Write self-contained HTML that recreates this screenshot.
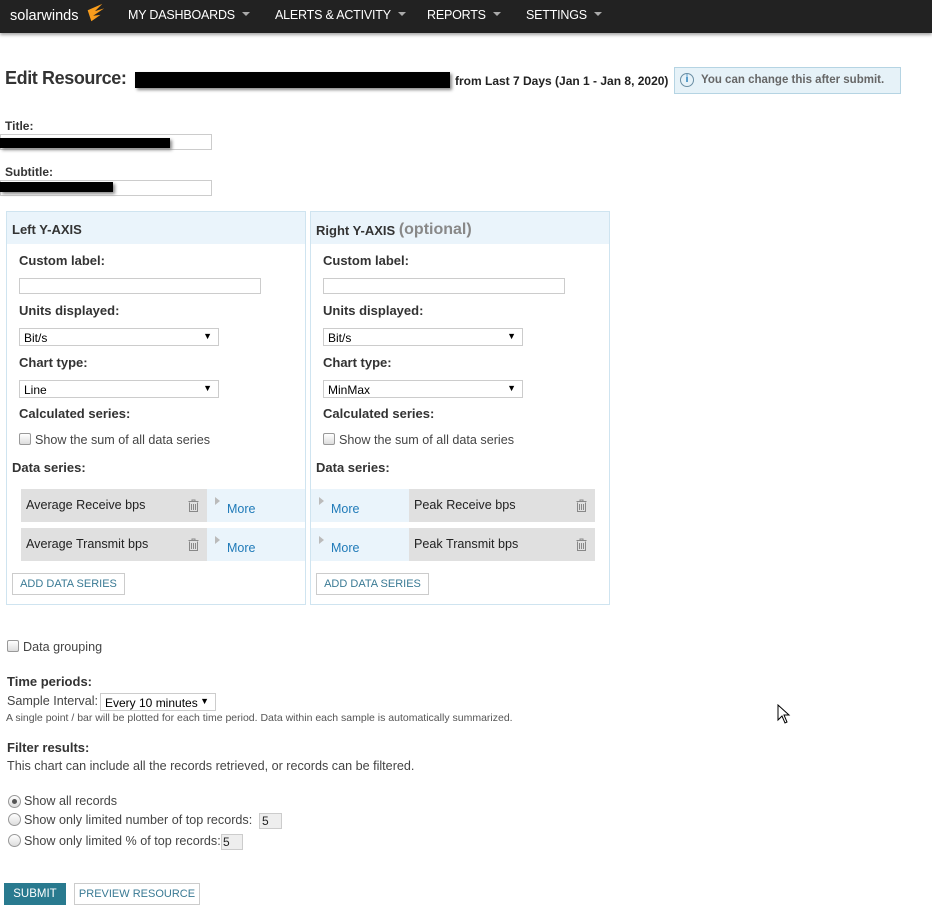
<!DOCTYPE html>
<html><head><meta charset="utf-8">
<style>
*{box-sizing:border-box;margin:0;padding:0}
body{width:932px;height:912px;background:#fff;position:relative;overflow:hidden;font-family:"Liberation Sans",sans-serif;color:#333;font-size:12px}
.a{position:absolute;white-space:nowrap}
.nav{position:absolute;left:0;top:0;width:932px;height:33px;background:#222;box-shadow:0 2px 3px rgba(0,0,0,.35)}
.nav .m{position:absolute;top:8px;color:#fff;font-size:12.5px;letter-spacing:-0.2px}
.nav .m::after{content:"";display:inline-block;margin-left:7px;border-left:4px solid transparent;border-right:4px solid transparent;border-top:4px solid #aaa;vertical-align:3px}
.b{font-weight:bold}
.lbl{font-weight:bold;font-size:13px;color:#333}
.inp{position:absolute;border:1px solid #ccc;background:#fff}
.sel{position:absolute;border:1px solid #ccc;background:#fff;font-size:12px;color:#000;padding:2px 0 0 4px}
.sel::after{content:"▼";position:absolute;right:6px;top:2px;font-size:9px}
.cb{position:absolute;width:12px;height:12px;border:1px solid #999;border-radius:2px;background:linear-gradient(#fff,#ddd)}
.rb{position:absolute;width:13px;height:13px;border:1px solid #999;border-radius:50%;background:linear-gradient(#fff,#ddd)}
.panel{position:absolute;border:1px solid #cfe4f0;width:300px;height:394px;top:211px}
.ph{position:absolute;left:0;top:0;right:0;height:32px;background:#eaf4fb}
.gray{position:absolute;background:#e0e0e0;height:33px}
.blue{position:absolute;background:#eaf4fb;height:33px}
.more{color:#1f7ab8;font-size:12.5px}
.tri{position:absolute;border-top:4px solid transparent;border-bottom:4px solid transparent;border-left:5px solid #bbb}
.t{font-size:12.6px;color:#444}
.btn{position:absolute;border:1px solid #ccc;background:#fff;color:#3a7a94;font-size:11px;text-align:center;line-height:20px}
.blk{position:absolute;background:#000}
</style></head><body>
<div class="nav">
 <div class="a" style="left:10px;top:8px;color:#fff;font-size:14.5px">solarwinds</div>
 <svg class="a" style="left:84px;top:2px" width="22" height="22" viewBox="0 0 24 22"><path d="M4 8 L20 1 L12 9 L22 6 L10 14 L18 13 L8 20 Z" fill="#f99d1c"/></svg>
 <div class="m" style="left:128px">MY DASHBOARDS</div>
 <div class="m" style="left:275px">ALERTS &amp; ACTIVITY</div>
 <div class="m" style="left:427px">REPORTS</div>
 <div class="m" style="left:526px">SETTINGS</div>
</div>

<div class="a b" style="left:5px;top:68px;font-size:18px;letter-spacing:-0.4px;color:#333">Edit Resource:</div>
<div class="blk" style="left:135px;top:72px;width:315px;height:16px;box-shadow:2px 2px 3px #888"></div>
<div class="a b" style="left:455px;top:74px;font-size:12px;color:#222">from Last 7 Days (Jan 1 - Jan 8, 2020)</div>
<div class="a" style="left:674px;top:67px;width:227px;height:27px;background:#e6f2f8;border:1px solid #b5d4e3"></div>
<div class="a" style="left:680px;top:73px;width:14px;height:14px;border:1px solid #6a8ea3;border-radius:50%;color:#1f7ab8;font-size:10px;font-weight:bold;text-align:center;line-height:12px">i</div>
<div class="a b" style="left:701px;top:74px;font-size:11.5px;color:#666">You can change this after submit.</div>

<div class="a b" style="left:5px;top:119px;font-size:12px">Title:</div>
<div class="inp" style="left:0;top:134px;width:212px;height:16px"></div>
<div class="blk" style="left:0;top:138px;width:170px;height:10px;box-shadow:2px 2px 3px #888"></div>
<div class="a b" style="left:5px;top:165px;font-size:12px">Subtitle:</div>
<div class="inp" style="left:0;top:180px;width:212px;height:16px"></div>
<div class="blk" style="left:0;top:182px;width:113px;height:10px;box-shadow:2px 2px 3px #888"></div>

<div class="panel" style="left:6px">
 <div class="ph"></div>
 <div class="a b" style="left:5px;top:10px;font-size:13px">Left Y-AXIS</div>
</div>
<div class="a lbl" style="left:19px;top:253px">Custom label:</div>
<div class="inp" style="left:19px;top:278px;width:242px;height:16px"></div>
<div class="a lbl" style="left:19px;top:303px">Units displayed:</div>
<div class="sel" style="left:19px;top:328px;width:200px;height:18px">Bit/s</div>
<div class="a lbl" style="left:19px;top:355px">Chart type:</div>
<div class="sel" style="left:19px;top:380px;width:200px;height:18px">Line</div>
<div class="a lbl" style="left:19px;top:406px">Calculated series:</div>
<div class="cb" style="left:19px;top:433px"></div>
<div class="a t" style="left:35px;top:433px">Show the sum of all data series</div>
<div class="a lbl" style="left:12px;top:460px">Data series:</div>
<div class="gray" style="left:21px;top:489px;width:186px"></div>
<div class="blue" style="left:207px;top:489px;width:98px"></div>
<div class="a t" style="left:26px;top:498px;color:#222">Average Receive bps</div>
<svg class="a" style="left:188px;top:499px" width="11" height="13" viewBox="0 0 11 13"><path d="M0.5 2.5h10M4 2.5V1h3v1.5M1.5 3.5v9h8v-9M3.5 5v6M5.5 5v6M7.5 5v6" fill="none" stroke="#888"/></svg>
<div class="tri" style="left:215px;top:497px"></div>
<div class="a more" style="left:227px;top:502px">More</div>
<div class="gray" style="left:21px;top:528px;width:186px"></div>
<div class="blue" style="left:207px;top:528px;width:98px"></div>
<div class="a t" style="left:26px;top:537px;color:#222">Average Transmit bps</div>
<svg class="a" style="left:188px;top:538px" width="11" height="13" viewBox="0 0 11 13"><path d="M0.5 2.5h10M4 2.5V1h3v1.5M1.5 3.5v9h8v-9M3.5 5v6M5.5 5v6M7.5 5v6" fill="none" stroke="#888"/></svg>
<div class="tri" style="left:215px;top:536px"></div>
<div class="a more" style="left:227px;top:541px">More</div>
<div class="btn" style="left:12px;top:573px;width:113px;height:22px">ADD DATA SERIES</div>

<div class="panel" style="left:310px">
 <div class="ph"></div>
 <div class="a b" style="left:5px;top:10px;font-size:13px">Right Y-AXIS <span style="color:#888;font-size:16px;position:relative;top:-1px">(optional)</span></div>
</div>
<div class="a lbl" style="left:323px;top:253px">Custom label:</div>
<div class="inp" style="left:323px;top:278px;width:242px;height:16px"></div>
<div class="a lbl" style="left:323px;top:303px">Units displayed:</div>
<div class="sel" style="left:323px;top:328px;width:200px;height:18px">Bit/s</div>
<div class="a lbl" style="left:323px;top:355px">Chart type:</div>
<div class="sel" style="left:323px;top:380px;width:200px;height:18px">MinMax</div>
<div class="a lbl" style="left:323px;top:406px">Calculated series:</div>
<div class="cb" style="left:323px;top:433px"></div>
<div class="a t" style="left:339px;top:433px">Show the sum of all data series</div>
<div class="a lbl" style="left:316px;top:460px">Data series:</div>
<div class="blue" style="left:311px;top:489px;width:98px"></div>
<div class="gray" style="left:409px;top:489px;width:186px"></div>
<div class="tri" style="left:319px;top:497px"></div>
<div class="a more" style="left:331px;top:502px">More</div>
<div class="a t" style="left:414px;top:498px;color:#222">Peak Receive bps</div>
<svg class="a" style="left:576px;top:499px" width="11" height="13" viewBox="0 0 11 13"><path d="M0.5 2.5h10M4 2.5V1h3v1.5M1.5 3.5v9h8v-9M3.5 5v6M5.5 5v6M7.5 5v6" fill="none" stroke="#888"/></svg>
<div class="blue" style="left:311px;top:528px;width:98px"></div>
<div class="gray" style="left:409px;top:528px;width:186px"></div>
<div class="tri" style="left:319px;top:536px"></div>
<div class="a more" style="left:331px;top:541px">More</div>
<div class="a t" style="left:414px;top:537px;color:#222">Peak Transmit bps</div>
<svg class="a" style="left:576px;top:538px" width="11" height="13" viewBox="0 0 11 13"><path d="M0.5 2.5h10M4 2.5V1h3v1.5M1.5 3.5v9h8v-9M3.5 5v6M5.5 5v6M7.5 5v6" fill="none" stroke="#888"/></svg>
<div class="btn" style="left:316px;top:573px;width:113px;height:22px">ADD DATA SERIES</div>

<div class="cb" style="left:7px;top:640px"></div>
<div class="a t" style="left:23px;top:640px">Data grouping</div>

<div class="a lbl" style="left:7px;top:674px">Time periods:</div>
<div class="a t" style="left:7px;top:694px">Sample Interval:</div>
<div class="sel" style="left:100px;top:693px;width:116px;height:18px;padding-left:4px">Every 10 minutes</div>
<div class="a" style="left:6px;top:712px;font-size:10.5px;color:#555">A single point / bar will be plotted for each time period. Data within each sample is automatically summarized.</div>

<div class="a lbl" style="left:7px;top:740px">Filter results:</div>
<div class="a t" style="left:7px;top:759px">This chart can include all the records retrieved, or records can be filtered.</div>

<div class="rb" style="left:8px;top:795px"><div style="width:5px;height:5px;background:#555;border-radius:50%;margin:3px"></div></div>
<div class="a t" style="left:24px;top:794px">Show all records</div>
<div class="rb" style="left:8px;top:813px"></div>
<div class="a t" style="left:24px;top:813px">Show only limited number of top records:</div>
<div class="a" style="left:259px;top:813px;width:23px;height:16px;background:#eee;border:1px solid #ccc;padding-left:2px;color:#222">5</div>
<div class="rb" style="left:8px;top:834px"></div>
<div class="a t" style="left:24px;top:834px">Show only limited % of top records:</div>
<div class="a" style="left:221px;top:834px;width:22px;height:16px;background:#eee;border:1px solid #ccc;padding-left:1px;color:#222">5</div>

<div class="a" style="left:4px;top:883px;width:62px;height:22px;background:#297a8f;color:#fff;font-size:11.5px;text-align:center;line-height:22px">SUBMIT</div>
<div class="btn" style="left:74px;top:883px;width:126px;height:22px">PREVIEW RESOURCE</div>

<svg class="a" style="left:777px;top:704px" width="14" height="21" viewBox="0 0 14 21"><path d="M1 1 L1 16 L5 12 L8 19 L10 18 L7 11 L12 11 Z" fill="#fff" stroke="#000"/></svg>
</body></html>
